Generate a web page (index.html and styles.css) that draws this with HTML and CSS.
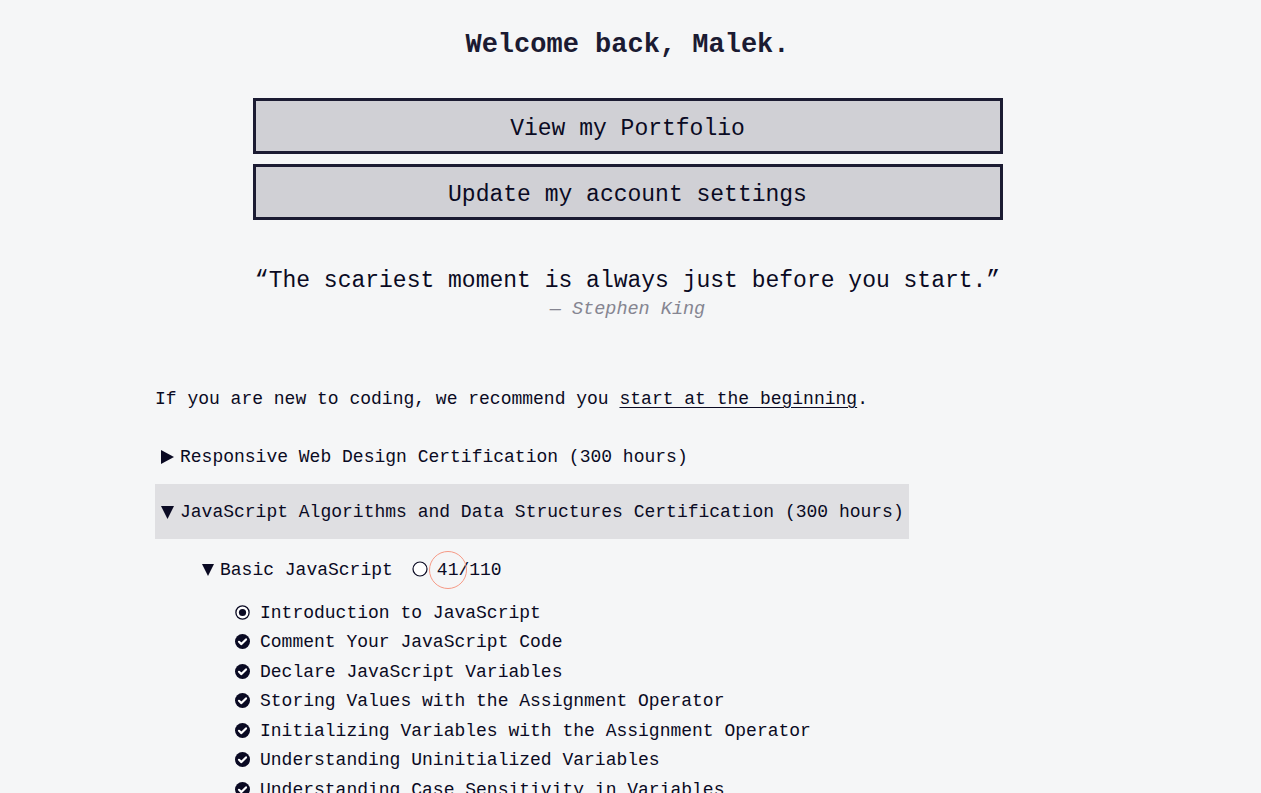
FILE: index.html
```html
<!DOCTYPE html>
<html lang="en">
<head>
<meta charset="utf-8">
<title>Welcome back</title>
<link rel="stylesheet" href="styles.css">
</head>
<body>
<main class="page">
  <h1 class="welcome">Welcome back, Malek.</h1>
  <div class="actions">
    <a class="btn" href="#">View my Portfolio</a>
    <a class="btn" href="#">Update my account settings</a>
  </div>
  <blockquote class="quote">
    <p class="quote-text">“The scariest moment is always just before you start.”</p>
    <p class="quote-author">— Stephen King</p>
  </blockquote>
  <p class="intro">If you are new to coding, we recommend you <a class="link" href="#">start at the beginning</a>.</p>

  <ul class="certs">
    <li class="cert">
      <div class="cert-head">
        <svg class="tri" width="13" height="14" viewBox="0 0 13 14"><polygon points="0,0 13,7 0,14" fill="#0a0a23"/></svg>
        <span>Responsive Web Design Certification (300 hours)</span>
      </div>
    </li>
    <li class="cert open">
      <div class="cert-head active">
        <svg class="tri" width="13" height="14" viewBox="0 0 13 14"><polygon points="0,1 13,1 6.5,14" fill="#0a0a23"/></svg>
        <span>JavaScript Algorithms and Data Structures Certification (300 hours)</span>
      </div>
      <div class="block">
        <div class="block-head">
          <svg class="tri small" width="12" height="13" viewBox="0 0 12 13"><polygon points="0,1 12,1 6,13" fill="#0a0a23"/></svg>
          <span class="block-title">Basic JavaScript</span>
          <svg class="status" width="16" height="16" viewBox="0 0 16 16"><circle cx="8" cy="8" r="7" fill="#fff" stroke="#0a0a23" stroke-width="1.2"/></svg>
          <span class="progress">41/110<span class="ring"></span></span>
        </div>
        <ul class="challenges">
          <li class="challenge">
            <svg class="ico" width="15" height="15" viewBox="0 0 15 15"><circle cx="7.5" cy="7.5" r="6.6" fill="#fff" stroke="#0a0a23" stroke-width="1.3"/><circle cx="7.5" cy="7.5" r="3.6" fill="#0a0a23"/></svg>
            <span>Introduction to JavaScript</span>
          </li>
          <li class="challenge">
            <svg class="ico" width="15" height="15" viewBox="0 0 15 15"><circle cx="7.5" cy="7.5" r="7.5" fill="#0a0a23"/><path d="M4 7.8 L6.4 10.1 L11 5.4" fill="none" stroke="#fff" stroke-width="2.2" stroke-linecap="round" stroke-linejoin="round"/></svg>
            <span>Comment Your JavaScript Code</span>
          </li>
          <li class="challenge">
            <svg class="ico" width="15" height="15" viewBox="0 0 15 15"><circle cx="7.5" cy="7.5" r="7.5" fill="#0a0a23"/><path d="M4 7.8 L6.4 10.1 L11 5.4" fill="none" stroke="#fff" stroke-width="2.2" stroke-linecap="round" stroke-linejoin="round"/></svg>
            <span>Declare JavaScript Variables</span>
          </li>
          <li class="challenge">
            <svg class="ico" width="15" height="15" viewBox="0 0 15 15"><circle cx="7.5" cy="7.5" r="7.5" fill="#0a0a23"/><path d="M4 7.8 L6.4 10.1 L11 5.4" fill="none" stroke="#fff" stroke-width="2.2" stroke-linecap="round" stroke-linejoin="round"/></svg>
            <span>Storing Values with the Assignment Operator</span>
          </li>
          <li class="challenge">
            <svg class="ico" width="15" height="15" viewBox="0 0 15 15"><circle cx="7.5" cy="7.5" r="7.5" fill="#0a0a23"/><path d="M4 7.8 L6.4 10.1 L11 5.4" fill="none" stroke="#fff" stroke-width="2.2" stroke-linecap="round" stroke-linejoin="round"/></svg>
            <span>Initializing Variables with the Assignment Operator</span>
          </li>
          <li class="challenge">
            <svg class="ico" width="15" height="15" viewBox="0 0 15 15"><circle cx="7.5" cy="7.5" r="7.5" fill="#0a0a23"/><path d="M4 7.8 L6.4 10.1 L11 5.4" fill="none" stroke="#fff" stroke-width="2.2" stroke-linecap="round" stroke-linejoin="round"/></svg>
            <span>Understanding Uninitialized Variables</span>
          </li>
          <li class="challenge">
            <svg class="ico" width="15" height="15" viewBox="0 0 15 15"><circle cx="7.5" cy="7.5" r="7.5" fill="#0a0a23"/><path d="M4 7.8 L6.4 10.1 L11 5.4" fill="none" stroke="#fff" stroke-width="2.2" stroke-linecap="round" stroke-linejoin="round"/></svg>
            <span>Understanding Case Sensitivity in Variables</span>
          </li>
        </ul>
      </div>
    </li>
  </ul>
</main>
</body>
</html>
```
FILE: styles.css
```css
* { box-sizing: border-box; }

html, body {
  margin: 0;
  padding: 0;
  background: #f5f6f7;
  color: #0a0a23;
  font-family: "Liberation Mono", "DejaVu Sans Mono", monospace;
  font-size: 18px;
}

.page {
  width: 945px;
  margin-left: 155px;
  padding-top: 29px;
  display: flex;
  flex-direction: column;
}

.welcome {
  margin: 0;
  text-align: center;
  font-size: 27px;
  line-height: 32px;
  font-weight: 700;
  color: #1b1b32;
}

.actions {
  margin-top: 37px;
  display: flex;
  flex-direction: column;
  align-items: center;
  gap: 10px;
}

.btn {
  display: flex;
  align-items: center;
  justify-content: center;
  width: 750px;
  height: 56px;
  padding-top: 5px;
  border: 3px solid #1b1b32;
  background: #d0d0d5;
  color: #0a0a23;
  font-size: 23px;
  text-decoration: none;
}

.quote {
  margin: 46px 0 0;
  text-align: center;
}

.quote-text {
  margin: 0;
  font-size: 23px;
  line-height: 30px;
}

.quote-author {
  margin: 0;
  font-size: 18.5px;
  line-height: 28px;
  font-style: italic;
  color: #858591;
}

.intro {
  margin: 61px 0 0;
  line-height: 28px;
}

.link {
  color: #0a0a23;
  text-decoration: underline;
  text-underline-offset: 3px;
}

.certs {
  list-style: none;
  margin: 16px 0 0;
  padding: 0;
}

.cert-head {
  display: flex;
  align-items: center;
  gap: 6px;
  height: 55px;
  padding-left: 6px;
  padding-top: 1px;
  width: 754px;
  white-space: nowrap;
}

.cert-head.active {
  background: #dfdfe2;
}

.tri { flex: none; margin-top: -1px; }

.block {
  padding-top: 17px;
}

.block-head {
  display: flex;
  align-items: center;
  padding-left: 47px;
  line-height: 28px;
  white-space: nowrap;
}

.block-head .tri { margin-right: 6px; }

.block-title { margin-right: 19px; }

.status { flex: none; margin-right: 9px; margin-top: -2px; }

.progress {
  position: relative;
}

.ring {
  position: absolute;
  left: -8px;
  top: -5px;
  width: 38px;
  height: 38px;
  border: 1.6px solid #f59a86;
  border-radius: 50%;
}

.challenges {
  list-style: none;
  margin: 14px 0 0;
  padding: 0 0 0 80px;
}

.challenge {
  display: flex;
  align-items: center;
  gap: 10px;
  height: 29.5px;
  white-space: nowrap;
}

.ico { flex: none; margin-top: -1px; }
```
